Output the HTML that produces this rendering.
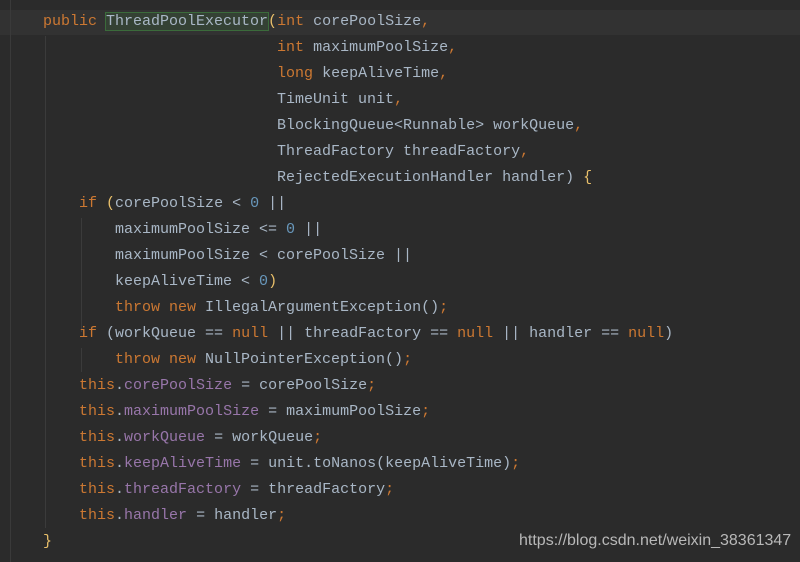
<!DOCTYPE html>
<html><head><meta charset="utf-8"><style>
body{margin:0;width:800px;height:562px;background:#2b2b2b;overflow:hidden;position:relative;font-family:"Liberation Mono",monospace;font-size:15px;color:#a9b7c6}
.cur{position:absolute;left:0;top:10px;width:800px;height:25px;background:#323232}
.gut{position:absolute;left:10px;top:0;width:1px;height:562px;background:#3a3a3a}
.g{position:absolute;width:1px;background:#3b3b3b}
.l{position:absolute;left:43px;height:26px;line-height:26px;white-space:pre}
.k{color:#cc7832}.f{color:#9876aa}.n{color:#6897bb}.y{color:#e8bf6a}
.hl{background:#344134;outline:1px solid #3b6b3b}
.wm{position:absolute;left:519px;top:532px;font-family:"Liberation Sans",sans-serif;font-size:16px;color:#b8b8b8}
</style></head><body>
<div class="cur"></div>
<div class="gut"></div>
<div class="g" style="left:45px;top:36px;height:492px"></div>
<div class="g" style="left:81px;top:218px;height:114px"></div>
<div class="g" style="left:81px;top:348px;height:24px"></div>
<div class="l" style="top:9px"><span class="k">public </span><span class="hl">ThreadPoolExecutor</span><span class="y">(</span><span class="k">int </span>corePoolSize<span class="k">,</span></div>
<div class="l" style="top:35px">                          <span class="k">int </span>maximumPoolSize<span class="k">,</span></div>
<div class="l" style="top:61px">                          <span class="k">long </span>keepAliveTime<span class="k">,</span></div>
<div class="l" style="top:87px">                          TimeUnit unit<span class="k">,</span></div>
<div class="l" style="top:113px">                          BlockingQueue&lt;Runnable&gt; workQueue<span class="k">,</span></div>
<div class="l" style="top:139px">                          ThreadFactory threadFactory<span class="k">,</span></div>
<div class="l" style="top:165px">                          RejectedExecutionHandler handler) <span class="y">{</span></div>
<div class="l" style="top:191px">    <span class="k">if </span><span class="y">(</span>corePoolSize &lt; <span class="n">0</span> ||</div>
<div class="l" style="top:217px">        maximumPoolSize &lt;= <span class="n">0</span> ||</div>
<div class="l" style="top:243px">        maximumPoolSize &lt; corePoolSize ||</div>
<div class="l" style="top:269px">        keepAliveTime &lt; <span class="n">0</span><span class="y">)</span></div>
<div class="l" style="top:295px">        <span class="k">throw new </span>IllegalArgumentException()<span class="k">;</span></div>
<div class="l" style="top:321px">    <span class="k">if </span>(workQueue == <span class="k">null</span> || threadFactory == <span class="k">null</span> || handler == <span class="k">null</span>)</div>
<div class="l" style="top:347px">        <span class="k">throw new </span>NullPointerException()<span class="k">;</span></div>
<div class="l" style="top:373px">    <span class="k">this</span>.<span class="f">corePoolSize</span> = corePoolSize<span class="k">;</span></div>
<div class="l" style="top:399px">    <span class="k">this</span>.<span class="f">maximumPoolSize</span> = maximumPoolSize<span class="k">;</span></div>
<div class="l" style="top:425px">    <span class="k">this</span>.<span class="f">workQueue</span> = workQueue<span class="k">;</span></div>
<div class="l" style="top:451px">    <span class="k">this</span>.<span class="f">keepAliveTime</span> = unit.toNanos(keepAliveTime)<span class="k">;</span></div>
<div class="l" style="top:477px">    <span class="k">this</span>.<span class="f">threadFactory</span> = threadFactory<span class="k">;</span></div>
<div class="l" style="top:503px">    <span class="k">this</span>.<span class="f">handler</span> = handler<span class="k">;</span></div>
<div class="l" style="top:529px"><span class="y">}</span></div>
<div class="wm">https://blog.csdn.net/weixin_38361347</div>
</body></html>
